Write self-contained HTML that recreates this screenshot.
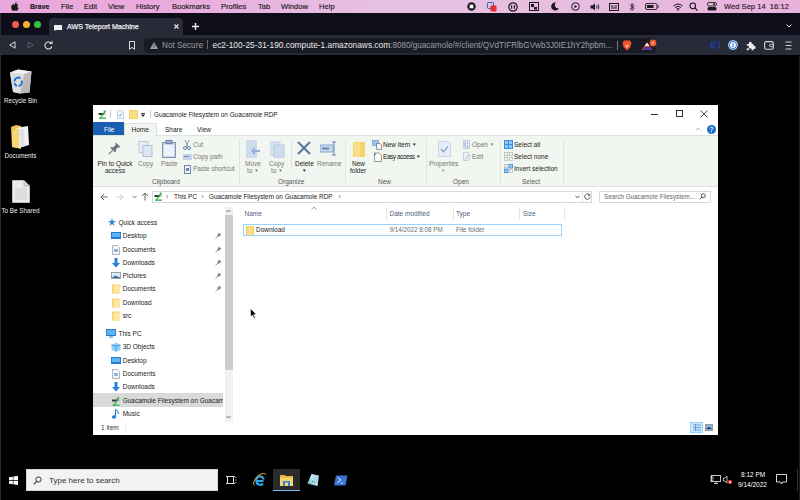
<!DOCTYPE html>
<html><head><meta charset="utf-8">
<style>
*{margin:0;padding:0;box-sizing:border-box}
html,body{width:800px;height:500px;overflow:hidden;background:#000;font-family:"Liberation Sans",sans-serif}
.a{position:absolute;white-space:nowrap}
svg{display:block}
#menubar{left:0;top:0;width:800px;height:13px;background:linear-gradient(90deg,#eaa8dc 0%,#e9abdc 20%,#e7bbe1 40%,#e6c3e3 52%,#e7bde0 70%,#e9b2dd 100%)}
.mt{font-size:7.6px;line-height:13px;top:0;color:#1e1a1e;-webkit-text-stroke:0.15px #1e1a1e}
#tabbar{left:0;top:13px;width:800px;height:22px;background:#0f0d19}
#toolbar{left:0;top:35px;width:800px;height:20px;background:#272a37}
.dot{width:7px;height:7px;border-radius:50%;top:21px}
.dt{color:#e8e8e8;font-size:6.3px;line-height:8px;text-align:center}
#win{left:93px;top:105px;width:625px;height:330px;background:#fff}
.w{position:absolute;white-space:nowrap;font-size:6.5px;line-height:8px;color:#1a1a1a}
</style></head><body>
<!-- mac menubar -->
<div id="menubar" class="a"></div>
<div class="a mt" style="left:30px;font-weight:700;font-size:7px">Brave</div>
<div class="a mt" style="left:61px">File</div>
<div class="a mt" style="left:84px">Edit</div>
<div class="a mt" style="left:108px">View</div>
<div class="a mt" style="left:136px">History</div>
<div class="a mt" style="left:172px">Bookmarks</div>
<div class="a mt" style="left:221px">Profiles</div>
<div class="a mt" style="left:258px">Tab</div>
<div class="a mt" style="left:281px">Window</div>
<div class="a mt" style="left:319px">Help</div>
<div class="a mt" style="left:724px">Wed Sep 14&nbsp; 16:12</div>

<!-- tab bar -->
<div id="tabbar" class="a"></div>
<div class="a dot" style="left:11.5px;background:#ee5b50"></div>
<div class="a dot" style="left:22.5px;background:#f4b32f"></div>
<div class="a dot" style="left:33.5px;background:#34c03f"></div>
<div class="a" style="left:49px;top:18px;width:134px;height:17px;background:#272a37;border-radius:4px 4px 0 0"></div>
<div class="a" style="left:67px;top:23px;font-size:7.1px;line-height:9px;color:#ececf0;font-weight:400;-webkit-text-stroke:0.25px #ececf0">AWS Teleport Machine</div>

<!-- toolbar -->
<div id="toolbar" class="a"></div>
<div class="a" style="left:144px;top:37.5px;width:512px;height:15px;background:#1a1c25;border-radius:4px"></div>
<div class="a" style="left:162px;top:41px;font-size:8.2px;line-height:9px;color:#9a9ca4">Not Secure</div>
<div class="a" style="left:207px;top:40px;width:1px;height:9px;background:#666"></div>
<div class="a" style="left:212.5px;top:41px;font-size:8.36px;line-height:9px;color:#e8e8ec">ec2-100-25-31-190.compute-1.amazonaws.com<span style="color:#9a9ca4;font-size:8.13px">:8080/guacamole/#/client/QVdTIFRlbGVwb3J0IE1hY2hpbm...</span></div>


<!-- apple -->
<svg class="a" style="left:11px;top:2px" width="8" height="9" viewBox="0 0 8 9"><path d="M4 2.2 C5 1.6 6.5 1.8 7.2 2.8 C6 3.5 6.2 5.6 7.6 6 C7.2 7.3 6.3 8.8 5.4 8.8 C4.7 8.8 4.6 8.4 3.8 8.4 C3 8.4 2.8 8.8 2.2 8.8 C1.2 8.8 0.2 7 0.2 5.3 C0.2 3.3 1.5 2.2 2.6 2.2 C3.2 2.2 3.6 2.5 4 2.5Z M4 2 C4 1 4.8 0.2 5.6 0.1 C5.7 1 4.9 2 4 2Z" fill="#1a1a1a"/></svg>
<!-- right menubar icons -->
<svg class="a" style="left:466px;top:2px" width="11" height="9" viewBox="0 0 11 9"><circle cx="5.5" cy="4.5" r="4.2" fill="#1b1b1b"/><rect x="3.7" y="2.7" width="3.6" height="3.6" fill="#fff"/></svg>
<svg class="a" style="left:487px;top:1.5px" width="10" height="10" viewBox="0 0 10 10"><rect x="0.5" y="0.5" width="6" height="6" rx="1" fill="none" stroke="#2060c0" stroke-width="1"/><rect x="3.5" y="3.5" width="6" height="6" rx="1" fill="#e03030"/></svg>
<svg class="a" style="left:508px;top:2px" width="10" height="10" viewBox="0 0 10 10"><circle cx="5" cy="5" r="4.2" fill="none" stroke="#1b1b1b" stroke-width="1.2"/><rect x="3" y="3.2" width="1.2" height="3.6" fill="#1b1b1b"/><rect x="5.8" y="3.2" width="1.2" height="3.6" fill="#1b1b1b"/></svg>
<svg class="a" style="left:529px;top:2px" width="10" height="9" viewBox="0 0 10 9"><rect x="0.5" y="0.5" width="9" height="8" fill="none" stroke="#1b1b1b" stroke-width="1"/><rect x="2" y="2" width="3" height="3" fill="#1b1b1b"/><rect x="5" y="5" width="3" height="2.5" fill="#1b1b1b"/></svg>
<svg class="a" style="left:551px;top:2px" width="8" height="9" viewBox="0 0 8 9"><path d="M5 0.5 A4 4 0 1 0 7.8 6.2 A3.3 3.3 0 0 1 5 0.5Z" fill="#1b1b1b"/></svg>
<svg class="a" style="left:571px;top:2px" width="9" height="9" viewBox="0 0 9 9"><circle cx="4.5" cy="4.5" r="3.8" fill="none" stroke="#1b1b1b" stroke-width="1"/><path d="M3.5 2.8 L6.2 4.5 L3.5 6.2Z" fill="#1b1b1b"/></svg>
<svg class="a" style="left:590px;top:2.5px" width="11" height="8" viewBox="0 0 11 8"><path d="M0.5 2.5 H2.5 L5 0.5 V7.5 L2.5 5.5 H0.5Z" fill="#1b1b1b"/><path d="M6.5 2.5 Q7.5 4 6.5 5.5 M8 1.5 Q9.8 4 8 6.5" stroke="#1b1b1b" stroke-width="0.9" fill="none"/></svg>
<svg class="a" style="left:609px;top:2.5px" width="10" height="8" viewBox="0 0 10 8"><rect x="0.5" y="0.5" width="9" height="7" fill="none" stroke="#1b1b1b" stroke-width="1"/><rect x="2" y="2.5" width="2.5" height="1" fill="#1b1b1b"/><rect x="5.5" y="2.5" width="2.5" height="1" fill="#1b1b1b"/><rect x="2" y="4.5" width="6" height="1" fill="#1b1b1b"/></svg>
<svg class="a" style="left:629px;top:1.5px" width="6" height="10" viewBox="0 0 6 10"><path d="M1 2.5 L5 6.5 L3 8.5 V1.5 L5 3.5 L1 7.5" stroke="#1b1b1b" stroke-width="0.9" fill="none"/></svg>
<svg class="a" style="left:645px;top:3px" width="14" height="7" viewBox="0 0 14 7"><rect x="0.5" y="0.5" width="11.5" height="6" rx="1.5" fill="none" stroke="#1b1b1b" stroke-width="0.9"/><rect x="2" y="2" width="6.5" height="3" fill="#1b1b1b"/><rect x="12.5" y="2.3" width="1" height="2.4" fill="#1b1b1b"/></svg>
<svg class="a" style="left:673px;top:2.5px" width="10" height="8" viewBox="0 0 10 8"><path d="M0.5 3 Q5 -1 9.5 3 M2 4.5 Q5 2 8 4.5 M3.5 6 Q5 5 6.5 6" stroke="#1b1b1b" stroke-width="1" fill="none"/><circle cx="5" cy="7" r="0.8" fill="#1b1b1b"/></svg>
<svg class="a" style="left:689px;top:2px" width="9" height="9" viewBox="0 0 9 9"><circle cx="3.8" cy="3.8" r="2.8" fill="none" stroke="#1b1b1b" stroke-width="1.1"/><path d="M5.8 5.8 L8.5 8.5" stroke="#1b1b1b" stroke-width="1.2"/></svg>
<svg class="a" style="left:707px;top:2px" width="10" height="9" viewBox="0 0 10 9"><rect x="0.5" y="0.5" width="9" height="3.5" rx="1.5" fill="none" stroke="#1b1b1b" stroke-width="0.9"/><rect x="0.5" y="5" width="9" height="3.5" rx="1.5" fill="#1b1b1b"/><circle cx="7" cy="2.25" r="1" fill="#1b1b1b"/></svg>
<!-- tab content -->
<svg class="a" style="left:54px;top:24.5px" width="8" height="6" viewBox="0 0 8 6"><rect x="0" y="0" width="8" height="5" fill="#eee"/><path d="M1 5 L0 6 L2.5 5Z" fill="#eee"/></svg>
<svg class="a" style="left:173.5px;top:24px" width="5" height="5" viewBox="0 0 5 5"><path d="M0.5 0.5 L4.5 4.5 M4.5 0.5 L0.5 4.5" stroke="#e6e6e6" stroke-width="1.2"/></svg>
<svg class="a" style="left:191.5px;top:23px" width="7" height="7" viewBox="0 0 7 7"><path d="M3.5 0 V7 M0 3.5 H7" stroke="#eee" stroke-width="1.4"/></svg>
<svg class="a" style="left:786px;top:24px" width="6" height="4" viewBox="0 0 6 4"><path d="M0.5 0.5 L3 3 L5.5 0.5" stroke="#ddd" stroke-width="1" fill="none"/></svg>
<!-- toolbar icons -->
<svg class="a" style="left:9px;top:41px" width="7" height="8" viewBox="0 0 7 8"><path d="M6 0.8 V7.2 L0.8 4Z" fill="none" stroke="#ddd" stroke-width="1"/></svg>
<svg class="a" style="left:27px;top:41px" width="7" height="8" viewBox="0 0 7 8"><path d="M1 0.8 V7.2 L6.2 4Z" fill="none" stroke="#5e6068" stroke-width="1"/></svg>
<svg class="a" style="left:44px;top:40.5px" width="9" height="9" viewBox="0 0 9 9"><path d="M7.6 3 A3.5 3.5 0 1 0 7.8 5.5" stroke="#ddd" stroke-width="1.1" fill="none"/><path d="M5.5 2.5 H8 V0" stroke="#ddd" stroke-width="1.1" fill="none"/></svg>
<svg class="a" style="left:128.5px;top:40.5px" width="6" height="9" viewBox="0 0 6 9"><path d="M0.5 0.5 H5.5 V8.3 L3 6.3 L0.5 8.3Z" fill="none" stroke="#ddd" stroke-width="1"/></svg>
<svg class="a" style="left:150px;top:41.5px" width="8" height="7" viewBox="0 0 8 7"><path d="M4 0 L8 7 H0Z" fill="#a0a2aa"/><rect x="3.6" y="2.3" width="0.8" height="2.4" fill="#1c1d24"/><rect x="3.6" y="5.3" width="0.8" height="0.8" fill="#1c1d24"/></svg>
<svg class="a" style="left:622px;top:39.5px" width="10" height="11" viewBox="0 0 10 11"><path d="M2 0.5 H8 L9.5 3 L8.5 7 L5 10.5 L1.5 7 L0.5 3Z" fill="#f1542a"/><path d="M3 4 L5 6 L7 4 L5 8Z" fill="#fff"/></svg>
<div class="a" style="left:616.5px;top:40.5px;width:1.2px;height:9px;background:#77787e"></div>
<svg class="a" style="left:641px;top:38.5px" width="16" height="12" viewBox="0 0 16 12"><path d="M0.5 11 L6 3.5 L11.5 11Z" fill="#d8402c"/><path d="M6 3.5 L8.5 7 L3.5 7Z" fill="#f4e8f0"/><path d="M1.5 11 L4 8 L9 8 L11.5 11Z" fill="#4a3aa8"/><circle cx="12" cy="4" r="3.4" fill="#ec5b34"/><circle cx="12" cy="4" r="1.3" fill="#f7a38a"/></svg>
<svg class="a" style="left:709.5px;top:40px" width="11" height="10" viewBox="0 0 11 10"><path d="M1 1.5 V8.5 M1 5 L5 1.5 M1 5 L5 8.5" stroke="#1f3c94" stroke-width="1.6" fill="none"/><path d="M6.5 2 H9.5 V8 H6.5" stroke="#1f3c94" stroke-width="1.4" fill="none"/><rect x="3.5" y="4" width="2" height="2" fill="#1f3c94"/></svg>
<svg class="a" style="left:727.5px;top:40px" width="10" height="10" viewBox="0 0 10 10"><circle cx="5" cy="5" r="4.8" fill="#dfe9f8"/><circle cx="5" cy="5" r="3.9" fill="#2f7de6"/><circle cx="5" cy="5" r="2.9" fill="#fff"/><rect x="4.4" y="2.8" width="1.2" height="4.4" fill="#2f7de6"/></svg>
<svg class="a" style="left:745.5px;top:40.5px" width="10" height="10" viewBox="0 0 10 10"><path d="M0.8 3 H3 A1.5 1.5 0 1 1 5.6 3 H7.5 V5 A1.5 1.5 0 1 1 7.5 7.8 V9.3 H5.4 A1.4 1.4 0 1 0 3 9.3 H0.8 V7.2 A1.4 1.4 0 1 0 0.8 4.8Z" fill="#ececec"/></svg>
<svg class="a" style="left:764px;top:41px" width="10" height="9" viewBox="0 0 10 9"><rect x="0.6" y="0.6" width="8.8" height="7.6" rx="1.8" fill="none" stroke="#d4d4d4" stroke-width="1.1"/><rect x="5.6" y="3.3" width="3.6" height="2.4" rx="0.6" fill="none" stroke="#d4d4d4" stroke-width="0.9"/></svg>
<svg class="a" style="left:784.5px;top:40.5px" width="7" height="9" viewBox="0 0 7 9"><path d="M0.5 1 H6.5 M0.5 4.5 H6.5 M0.5 8 H6.5" stroke="#d0d0d0" stroke-width="1"/></svg>
<!-- desktop icons -->
<div class="a dt" style="left:0;top:97px;width:41px">Recycle Bin</div>
<div class="a dt" style="left:0;top:152px;width:41px">Documents</div>
<div class="a dt" style="left:0;top:207px;width:41px">To Be Shared</div>

<!-- explorer window -->

<div class="a" style="left:93px;top:105px;width:625px;height:330px;background:#fff"></div>
<!-- title bar -->
<svg class="a" style="left:98px;top:110px" width="9" height="9" viewBox="0 0 9 9"><rect x="0.5" y="3" width="5.5" height="2" fill="#3a3a3a"/><rect x="6" y="3.5" width="2" height="1" fill="#999"/><path d="M2.5 8 L4.5 5 L7.5 1" stroke="#35b04a" stroke-width="1.3" fill="none"/><circle cx="6.5" cy="1.5" r="1" fill="#35b04a"/><rect x="1" y="7.5" width="7" height="1.3" fill="#35b04a"/></svg>
<div class="a" style="left:110px;top:110px;width:1px;height:8px;background:#ccc"></div>
<svg class="a" style="left:117px;top:110px" width="7" height="9" viewBox="0 0 7 9"><path d="M0.5 0.5 H5 L6.5 2 V8.5 H0.5Z" fill="#f3f6fb" stroke="#b8c6e0" stroke-width="0.8"/><path d="M1.8 4.8 L3 6.2 L5.2 3.2" stroke="#7fa6d6" stroke-width="0.9" fill="none"/></svg>
<svg class="a" style="left:128.5px;top:110px" width="9" height="9" viewBox="0 0 9 9"><rect x="0" y="0" width="9" height="9" fill="#f4cf5f"/><rect x="1" y="0.8" width="7" height="7.4" fill="#f9dc85"/></svg>
<svg class="a" style="left:141px;top:113px" width="4" height="4" viewBox="0 0 4 4"><rect x="0" y="0" width="4" height="0.8" fill="#222"/><path d="M0 1.6 H4 L2 4Z" fill="#222"/></svg>
<div class="a" style="left:150px;top:110px;width:1px;height:8px;background:#ccc"></div>
<div class="w" style="left:154px;top:110.5px;font-size:6.4px">Guacamole Filesystem on Guacamole RDP</div>
<div class="a" style="left:650.5px;top:113.5px;width:7px;height:1px;background:#333"></div>
<div class="a" style="left:675.5px;top:110px;width:7px;height:7px;border:1px solid #333"></div>
<svg class="a" style="left:700px;top:110px" width="8" height="8" viewBox="0 0 8 8"><path d="M0.5 0.5 L7.5 7.5 M7.5 0.5 L0.5 7.5" stroke="#333" stroke-width="0.9"/></svg>
<!-- ribbon tabs -->
<div class="a" style="left:93px;top:122px;width:31px;height:13px;background:#1a5eb4"></div>
<div class="w" style="left:104px;top:125.5px;color:#fff">File</div>
<div class="a" style="left:124px;top:123px;width:33px;height:13px;background:#f2f6f0;border:1px solid #dde1dc;border-bottom:none"></div>
<div class="w" style="left:131.5px;top:125.5px">Home</div>
<div class="w" style="left:165px;top:126px">Share</div>
<div class="w" style="left:197px;top:126px">View</div>
<svg class="a" style="left:706.5px;top:124.5px" width="9" height="9" viewBox="0 0 9 9"><circle cx="4.5" cy="4.5" r="4.5" fill="#1c6fce"/><path d="M3.2 3.4 A1.3 1.3 0 1 1 4.5 4.7 V5.6" stroke="#fff" stroke-width="0.9" fill="none"/><rect x="4" y="6.4" width="1" height="1" fill="#fff"/></svg>
<svg class="a" style="left:695px;top:127px" width="6" height="4" viewBox="0 0 6 4"><path d="M0.5 3.5 L3 1 L5.5 3.5" stroke="#aaa" stroke-width="0.8" fill="none"/></svg>
<!-- ribbon body -->
<div class="a" style="left:93px;top:135px;width:625px;height:52px;background:#f2f6f0;border-top:1px solid #dde1dc;border-bottom:1px solid #dde1dc"></div>
<div class="a" style="left:125px;top:135px;width:31px;height:1px;background:#f2f6f0"></div>
<div class="a" style="left:239px;top:139px;width:1px;height:46px;background:#e2e3e4"></div>
<div class="a" style="left:345px;top:139px;width:1px;height:46px;background:#e2e3e4"></div>
<div class="a" style="left:425.5px;top:139px;width:1px;height:46px;background:#e2e3e4"></div>
<div class="a" style="left:499.5px;top:139px;width:1px;height:46px;background:#e2e3e4"></div>
<div class="a" style="left:563px;top:139px;width:1px;height:46px;background:#e2e3e4"></div>
<div class="a" style="left:290.5px;top:141px;width:1px;height:29px;background:#e2e3e4"></div>



<!-- clipboard group -->
<svg class="a" style="left:108px;top:142px" width="13" height="13" viewBox="0 0 13 13"><path d="M8 0.5 L12.5 5 L11.3 5.6 L10.3 5.2 L7.8 7.7 L8 9.8 L7 10.6 L2.4 6 L3.2 5 L5.3 5.2 L7.8 2.7 L7.4 1.7Z" fill="#707480"/><path d="M4.6 8.4 L0.8 12.2" stroke="#707480" stroke-width="1.2"/></svg>
<div class="w" style="left:97.5px;top:160px">Pin to Quick</div>
<div class="w" style="left:105px;top:167px">access</div>
<svg class="a" style="left:138px;top:141px" width="16" height="16" viewBox="0 0 16 16"><rect x="1" y="0.5" width="9" height="11" fill="#e9eef6" stroke="#b9c7dc"/><rect x="5" y="4.5" width="9" height="11" fill="#dfe7f3" stroke="#aebfd8"/></svg>
<div class="w" style="left:138px;top:160px;color:#777">Copy</div>
<svg class="a" style="left:162px;top:140px" width="14" height="18" viewBox="0 0 14 18"><rect x="0.5" y="2.5" width="13" height="15" fill="#c9d6e8" stroke="#7c95b8"/><rect x="2" y="5" width="10" height="11" fill="#eef3fa"/><rect x="4" y="0.5" width="6" height="3" fill="#9fb1ca" stroke="#6d86a8"/></svg>
<div class="w" style="left:161px;top:160px;color:#777">Paste</div>
<svg class="a" style="left:183px;top:140px" width="8" height="10" viewBox="0 0 8 10"><path d="M2 0 L5 7 M6 0 L3 7" stroke="#8aa0bf" stroke-width="1"/><circle cx="2" cy="8" r="1.5" fill="none" stroke="#6f87ab"/><circle cx="6" cy="8" r="1.5" fill="none" stroke="#6f87ab"/></svg>
<div class="w" style="left:193px;top:140.5px;color:#777">Cut</div>
<svg class="a" style="left:183px;top:154px" width="9" height="6" viewBox="0 0 9 6"><rect x="0" y="0" width="9" height="6" fill="#c6d3e6"/><rect x="1" y="2" width="5" height="1" fill="#6f87ab"/></svg>
<div class="w" style="left:193px;top:153px;color:#777">Copy path</div>
<svg class="a" style="left:184px;top:165px" width="7" height="9" viewBox="0 0 7 9"><rect x="0.5" y="0.5" width="6" height="8" fill="#eef3fa" stroke="#6f87ab"/><rect x="2" y="3" width="3" height="3" fill="#6f87ab"/></svg>
<div class="w" style="left:193px;top:165px;color:#777">Paste shortcut</div>
<div class="w" style="left:152px;top:178px;color:#555">Clipboard</div>
<!-- organize -->
<svg class="a" style="left:246px;top:140px" width="15" height="18" viewBox="0 0 15 18"><rect x="0" y="0" width="11" height="18" fill="#cfdcec"/><path d="M14 10 L9 10 L9 7 L5 11 L9 15 L9 12 L14 12Z" fill="#8fb0d8"/></svg>
<div class="w" style="left:245px;top:160px;color:#777">Move</div>
<div class="w" style="left:247px;top:167px;color:#777">to <span style="font-size:4.5px;vertical-align:1px">&#9660;</span></div>
<svg class="a" style="left:270px;top:140px" width="15" height="18" viewBox="0 0 15 18"><rect x="0" y="2" width="10" height="13" fill="#dbe4f0" stroke="#c4d1e3"/><rect x="4" y="5" width="10" height="13" fill="#cfdcec" stroke="#b8c8de"/></svg>
<div class="w" style="left:269px;top:160px;color:#777">Copy</div>
<div class="w" style="left:271px;top:167px;color:#777">to <span style="font-size:4.5px;vertical-align:1px">&#9660;</span></div>
<svg class="a" style="left:297px;top:141px" width="14" height="14" viewBox="0 0 14 14"><path d="M1.5 1.5 L12.5 12.5 M12.5 1.5 L1.5 12.5" stroke="#5879a2" stroke-width="2.1" stroke-linecap="round"/></svg>
<div class="w" style="left:295px;top:160px;color:#222">Delete</div>
<div class="w" style="left:302px;top:167px;color:#222"><span style="font-size:4.5px;vertical-align:1px">&#9660;</span></div>
<svg class="a" style="left:320px;top:141px" width="18" height="15" viewBox="0 0 18 15"><rect x="0" y="4" width="13" height="7" fill="#c8d7ea" stroke="#8aa6cc"/><rect x="2" y="6.5" width="7" height="2" fill="#5f86bb"/><path d="M12 1 L16 1 M14 1 L14 14 M12 14 L16 14" stroke="#5f86bb" stroke-width="1"/></svg>
<div class="w" style="left:317px;top:160px;color:#777">Rename</div>
<div class="w" style="left:278px;top:178px;color:#555">Organize</div>
<!-- new -->
<svg class="a" style="left:352.5px;top:141.5px" width="12" height="15" viewBox="0 0 12 15"><rect x="0" y="0" width="12" height="15" fill="#f6d267"/><rect x="1" y="1" width="6" height="14" fill="#f9df8e"/></svg>
<div class="w" style="left:352px;top:160px;color:#222">New</div>
<div class="w" style="left:350px;top:167px;color:#222">folder</div>
<svg class="a" style="left:372px;top:139.5px" width="10" height="10" viewBox="0 0 10 10"><rect x="0.3" y="0.3" width="6" height="5" fill="#9cc3ea" stroke="#5b8fcf" stroke-width="0.6"/><path d="M4.5 3.5 H8 L9.5 5 V9.5 H4.5Z" fill="#f4f6fa" stroke="#6c6c6c" stroke-width="0.7"/></svg>
<div class="w" style="left:383px;top:140.5px;color:#222">New item <span style="font-size:4.5px;vertical-align:1px">&#9660;</span></div>
<svg class="a" style="left:373px;top:152px" width="9" height="10" viewBox="0 0 9 10"><path d="M1.5 1 H6 L8.5 3.5 V9.5 H1.5Z" fill="#fff" stroke="#6c6c6c" stroke-width="0.7"/><path d="M0.5 3.5 L2.5 1 L2.8 2.8Z" fill="#2d7ad6"/></svg>
<div class="w" style="left:383px;top:153px;color:#222;letter-spacing:-0.45px">Easy access <span style="font-size:4.5px;vertical-align:1px">&#9660;</span></div>
<div class="w" style="left:378px;top:178px;color:#555">New</div>
<!-- open -->
<svg class="a" style="left:437.5px;top:141px" width="13" height="16" viewBox="0 0 13 16"><path d="M0.5 0.5 H10 L12.5 3 V15.5 H0.5Z" fill="#e6eef9" stroke="#bfcde3" stroke-width="0.8"/><path d="M2.8 8 L5.3 10.8 L10 5.5" stroke="#7594c0" stroke-width="1.1" fill="none"/></svg>
<div class="w" style="left:429px;top:160px;color:#777">Properties</div>
<div class="w" style="left:441px;top:167px;color:#999"><span style="font-size:4.5px;vertical-align:1px">&#9660;</span></div>
<svg class="a" style="left:462.5px;top:140px" width="7" height="9" viewBox="0 0 7 9"><rect x="0.5" y="0.5" width="6" height="8" fill="#e8eef8" stroke="#b0c0d8" stroke-width="0.7"/><path d="M2 1.5 V7.5 M4.5 2 V4 M4.5 5 V8" stroke="#7d96bb" stroke-width="0.8"/></svg>
<div class="w" style="left:472px;top:140.5px;color:#777">Open <span style="font-size:4.5px;vertical-align:1px">&#9660;</span></div>
<svg class="a" style="left:462.5px;top:152px" width="8" height="9" viewBox="0 0 8 9"><path d="M0.5 0.5 H5 L7.5 4 L5 8.5 H0.5Z" fill="#eef3fa" stroke="#b0c0d8" stroke-width="0.7"/><path d="M2 7.5 L6 2" stroke="#8fa9cc" stroke-width="0.8"/></svg>
<div class="w" style="left:472px;top:153px;color:#777">Edit</div>
<div class="w" style="left:453px;top:178px;color:#555">Open</div>
<!-- select -->
<svg class="a" style="left:504px;top:140px" width="9" height="9" viewBox="0 0 9 9"><rect x="0" y="0" width="9" height="9" fill="#3b8fe3"/><rect x="1" y="1" width="3" height="3" fill="#8fcaf7"/><rect x="5" y="1" width="3" height="3" fill="#8fcaf7"/><rect x="1" y="5" width="3" height="3" fill="#8fcaf7"/><rect x="5" y="5" width="3" height="3" fill="#8fcaf7"/></svg>
<div class="w" style="left:514px;top:140.5px;color:#222">Select all</div>
<svg class="a" style="left:504px;top:152px" width="9" height="9" viewBox="0 0 9 9"><g fill="none" stroke="#b5b5b5" stroke-width="0.7"><rect x="0.5" y="0.5" width="3.2" height="3.2"/><rect x="5.3" y="0.5" width="3.2" height="3.2"/><rect x="0.5" y="5.3" width="3.2" height="3.2"/><rect x="5.3" y="5.3" width="3.2" height="3.2"/></g></svg>
<div class="w" style="left:514px;top:153px;color:#222">Select none</div>
<svg class="a" style="left:504px;top:164px" width="9" height="9" viewBox="0 0 9 9"><g fill="none" stroke="#b5b5b5" stroke-width="0.7"><rect x="0.5" y="0.5" width="3.2" height="3.2"/><rect x="5.3" y="5.3" width="3.2" height="3.2"/></g><rect x="4.6" y="0" width="4.4" height="4.4" fill="#3b8fe3"/><rect x="5.4" y="0.8" width="2.8" height="2.8" fill="#8fcaf7"/><rect x="0" y="4.6" width="4.4" height="4.4" fill="#3b8fe3"/><rect x="0.8" y="5.4" width="2.8" height="2.8" fill="#8fcaf7"/></svg>
<div class="w" style="left:514px;top:165px;color:#222">Invert selection</div>
<div class="w" style="left:522px;top:178px;color:#555">Select</div>
<!-- address bar -->
<svg class="a" style="left:100px;top:193px" width="8" height="8" viewBox="0 0 8 8"><path d="M7.5 4 H1 M4 1 L1 4 L4 7" stroke="#555" stroke-width="0.9" fill="none"/></svg>
<svg class="a" style="left:116px;top:193px" width="8" height="8" viewBox="0 0 8 8"><path d="M0.5 4 H7 M4 1 L7 4 L4 7" stroke="#c4c4c4" stroke-width="0.9" fill="none"/></svg>
<svg class="a" style="left:132px;top:195px" width="5" height="4" viewBox="0 0 5 4"><path d="M0.5 0.8 L2.5 3 L4.5 0.8" stroke="#666" stroke-width="0.8" fill="none"/></svg>
<svg class="a" style="left:141px;top:192px" width="8" height="9" viewBox="0 0 8 9"><path d="M4 8.5 V1 M1 4 L4 1 L7 4" stroke="#555" stroke-width="0.9" fill="none"/></svg>
<div class="a" style="left:152px;top:190.5px;width:440px;height:12px;border:1px solid #d9d9d9;background:#fff"></div>
<svg class="a" style="left:154px;top:192px" width="9" height="9" viewBox="0 0 9 9"><rect x="0.5" y="3" width="5.5" height="2" fill="#3a3a3a"/><rect x="6" y="3.5" width="2" height="1" fill="#999"/><path d="M2.5 8 L4.5 5 L7.5 1" stroke="#35b04a" stroke-width="1.3" fill="none"/><circle cx="6.5" cy="1.5" r="1" fill="#35b04a"/><rect x="1" y="7.5" width="7" height="1.3" fill="#35b04a"/></svg>
<div class="w" style="left:166px;top:192.5px;color:#555">&#8250;</div>
<div class="w" style="left:174px;top:192.5px;color:#222">This PC</div>
<div class="w" style="left:201.5px;top:192.5px;color:#555">&#8250;</div>
<div class="w" style="left:209px;top:192.5px;color:#222;font-size:6.4px">Guacamole Filesystem on Guacamole RDP</div>
<div class="w" style="left:338.5px;top:192.5px;color:#555">&#8250;</div>
<svg class="a" style="left:575px;top:195px" width="5" height="4" viewBox="0 0 5 4"><path d="M0.5 0.8 L2.5 3 L4.5 0.8" stroke="#444" stroke-width="0.9" fill="none"/></svg>
<div class="a" style="left:581.5px;top:191px;width:1px;height:11px;background:#e6e6e6"></div>
<svg class="a" style="left:584px;top:193px" width="7" height="7" viewBox="0 0 7 7"><path d="M5.8 2.5 A2.7 2.7 0 1 0 6 4" stroke="#555" stroke-width="0.9" fill="none"/><path d="M4.5 0.5 L6.2 2.4 L4 3" stroke="#555" stroke-width="0.8" fill="none"/></svg>
<div class="a" style="left:598.5px;top:190.5px;width:112px;height:12px;border:1px solid #d9d9d9;background:#fff"></div>
<div class="w" style="left:604px;top:192.5px;color:#666;font-size:6.3px">Search Guacamole Filesystem...</div>
<svg class="a" style="left:699px;top:193px" width="7" height="7" viewBox="0 0 7 7"><circle cx="4.3" cy="2.7" r="2" stroke="#444" stroke-width="0.9" fill="none"/><path d="M3 4 L0.8 6.2" stroke="#444" stroke-width="1"/></svg>
<!-- nav pane -->
<svg class="a" style="left:108px;top:218px" width="8" height="8" viewBox="0 0 8 8"><path d="M4 0 L5 3 L8 3 L5.5 5 L6.5 8 L4 6 L1.5 8 L2.5 5 L0 3 L3 3Z" fill="#2f88e0"/></svg>
<div class="w" style="left:118.5px;top:218.5px">Quick access</div>
<div class="a" style="left:110.7px;top:231.0px"><svg width="10" height="9" viewBox="0 0 10 9"><rect x="0" y="1" width="10" height="7" fill="#1f7fd6"/><rect x="1" y="2" width="8" height="4" fill="#5fb4f2"/></svg></div><div class="w" style="left:122.7px;top:232.0px;color:#222">Desktop</div><svg class="a" style="left:215px;top:232.0px" width="7" height="7" viewBox="0 0 7 7"><path d="M4 0.5 L6.5 3 L5.5 3.5 L3.5 5 L2 3.5 L3.5 1.5Z" fill="#8a8a8a"/><path d="M2.7 4.3 L0.5 6.5" stroke="#8a8a8a" stroke-width="0.9"/></svg><div class="a" style="left:110.7px;top:244.5px"><svg width="10" height="10" viewBox="0 0 10 10"><path d="M1.5 0.5 H6.5 L8.5 2.5 V9.5 H1.5Z" fill="#f4f6f9" stroke="#9aa7b5" stroke-width="0.8"/><rect x="3" y="4" width="4" height="3" fill="#8cb5e0"/></svg></div><div class="w" style="left:122.7px;top:245.5px;color:#222">Documents</div><svg class="a" style="left:215px;top:245.5px" width="7" height="7" viewBox="0 0 7 7"><path d="M4 0.5 L6.5 3 L5.5 3.5 L3.5 5 L2 3.5 L3.5 1.5Z" fill="#8a8a8a"/><path d="M2.7 4.3 L0.5 6.5" stroke="#8a8a8a" stroke-width="0.9"/></svg><div class="a" style="left:110.7px;top:257.5px"><svg width="10" height="10" viewBox="0 0 10 10"><path d="M3.5 0 H6.5 V5 H9 L5 9.5 L1 5 H3.5Z" fill="#2a7fd8"/></svg></div><div class="w" style="left:122.7px;top:258.5px;color:#222">Downloads</div><svg class="a" style="left:215px;top:258.5px" width="7" height="7" viewBox="0 0 7 7"><path d="M4 0.5 L6.5 3 L5.5 3.5 L3.5 5 L2 3.5 L3.5 1.5Z" fill="#8a8a8a"/><path d="M2.7 4.3 L0.5 6.5" stroke="#8a8a8a" stroke-width="0.9"/></svg><div class="a" style="left:110.7px;top:271.0px"><svg width="10" height="9" viewBox="0 0 10 9"><rect x="0.5" y="1.5" width="9" height="6" fill="#dfe9f3" stroke="#7f8e9c" stroke-width="0.8"/><path d="M1 7 L4 4.5 L9 6.5 V7Z" fill="#3a6ea8"/></svg></div><div class="w" style="left:122.7px;top:272.0px;color:#222">Pictures</div><svg class="a" style="left:215px;top:272.0px" width="7" height="7" viewBox="0 0 7 7"><path d="M4 0.5 L6.5 3 L5.5 3.5 L3.5 5 L2 3.5 L3.5 1.5Z" fill="#8a8a8a"/><path d="M2.7 4.3 L0.5 6.5" stroke="#8a8a8a" stroke-width="0.9"/></svg><div class="a" style="left:110.7px;top:284.0px"><svg width="10" height="10" viewBox="0 0 10 10"><rect x="1" y="0.5" width="8" height="9" fill="#f6d36b"/><rect x="2.5" y="1.5" width="6.5" height="8" fill="#fde6a3"/></svg></div><div class="w" style="left:122.7px;top:285.0px;color:#222">Documents</div><svg class="a" style="left:215px;top:285.0px" width="7" height="7" viewBox="0 0 7 7"><path d="M4 0.5 L6.5 3 L5.5 3.5 L3.5 5 L2 3.5 L3.5 1.5Z" fill="#8a8a8a"/><path d="M2.7 4.3 L0.5 6.5" stroke="#8a8a8a" stroke-width="0.9"/></svg><div class="a" style="left:110.7px;top:297.5px"><svg width="10" height="10" viewBox="0 0 10 10"><rect x="1" y="0.5" width="8" height="9" fill="#f6d36b"/><rect x="2.5" y="1.5" width="6.5" height="8" fill="#fde6a3"/></svg></div><div class="w" style="left:122.7px;top:298.5px;color:#222">Download</div><div class="a" style="left:110.7px;top:310.5px"><svg width="10" height="10" viewBox="0 0 10 10"><rect x="1" y="0.5" width="8" height="9" fill="#f6d36b"/><rect x="2.5" y="1.5" width="6.5" height="8" fill="#fde6a3"/></svg></div><div class="w" style="left:122.7px;top:311.5px;color:#222">src</div>
<svg class="a" style="left:106px;top:329px" width="10" height="9" viewBox="0 0 10 9"><rect x="0.5" y="0.5" width="9" height="6" fill="#5fb3f0" stroke="#2b7fcc"/><rect x="3" y="7.5" width="4" height="1" fill="#2b7fcc"/></svg>
<div class="w" style="left:118.5px;top:329.5px">This PC</div>
<div class="a" style="left:93px;top:393px;width:130px;height:14px;background:#d9d9d9"></div>
<div class="a" style="left:110.7px;top:342.0px"><svg width="10" height="10" viewBox="0 0 10 10"><path d="M5 0.5 L9.5 3 V8 L5 9.5 L0.5 8 V3Z" fill="#8fd0f5"/><path d="M5 4 V9.5 M0.5 3 L5 4 L9.5 3" stroke="#2a8fd6" stroke-width="0.8" fill="none"/></svg></div><div class="w" style="left:122.7px;top:343.0px;color:#222">3D Objects</div><div class="a" style="left:110.7px;top:355.5px"><svg width="10" height="9" viewBox="0 0 10 9"><rect x="0" y="1" width="10" height="7" fill="#1f7fd6"/><rect x="1" y="2" width="8" height="4" fill="#5fb4f2"/></svg></div><div class="w" style="left:122.7px;top:356.5px;color:#222">Desktop</div><div class="a" style="left:110.7px;top:368.5px"><svg width="10" height="10" viewBox="0 0 10 10"><path d="M1.5 0.5 H6.5 L8.5 2.5 V9.5 H1.5Z" fill="#f4f6f9" stroke="#9aa7b5" stroke-width="0.8"/><rect x="3" y="4" width="4" height="3" fill="#8cb5e0"/></svg></div><div class="w" style="left:122.7px;top:369.5px;color:#222">Documents</div><div class="a" style="left:110.7px;top:382.0px"><svg width="10" height="10" viewBox="0 0 10 10"><path d="M3.5 0 H6.5 V5 H9 L5 9.5 L1 5 H3.5Z" fill="#2a7fd8"/></svg></div><div class="w" style="left:122.7px;top:383.0px;color:#222">Downloads</div><div class="a" style="left:110.7px;top:395.5px"><svg width="10" height="10" viewBox="0 0 10 10"><rect x="1" y="3.5" width="5.5" height="2" fill="#3a3a3a"/><rect x="6.5" y="4" width="2" height="1" fill="#999"/><path d="M3 9 L5 6 L8 2" stroke="#35b04a" stroke-width="1.3" fill="none"/><circle cx="7" cy="2" r="1" fill="#35b04a"/><rect x="1.5" y="8.5" width="7" height="1.3" fill="#35b04a"/></svg></div><div class="w" style="left:122.7px;top:396.5px;color:#222;width:100.3px;overflow:hidden">Guacamole Filesystem on Guacam</div><div class="a" style="left:110.7px;top:408.5px"><svg width="10" height="10" viewBox="0 0 10 10"><path d="M4.5 0.5 V7.5" stroke="#2a7fd8" stroke-width="1.2"/><ellipse cx="3" cy="8" rx="2.2" ry="1.7" fill="#2a7fd8"/><path d="M4.5 0.5 Q8 2 7.5 5" stroke="#2a7fd8" stroke-width="1" fill="none"/></svg></div><div class="w" style="left:122.7px;top:409.5px;color:#222">Music</div>
<!-- scrollbar -->
<div class="a" style="left:224.5px;top:207px;width:8px;height:215px;background:#f0f0f0"></div>
<div class="a" style="left:224.5px;top:215px;width:8px;height:155px;background:#cdcdcd"></div>
<svg class="a" style="left:226px;top:209px" width="5" height="4" viewBox="0 0 5 4"><path d="M0.5 3 L2.5 1 L4.5 3" stroke="#555" stroke-width="0.9" fill="none"/></svg>
<svg class="a" style="left:226px;top:415px" width="5" height="4" viewBox="0 0 5 4"><path d="M0.5 1 L2.5 3 L4.5 1" stroke="#555" stroke-width="0.9" fill="none"/></svg>
<!-- content -->
<svg class="a" style="left:311px;top:206px" width="6" height="4" viewBox="0 0 6 4"><path d="M0.5 3.5 L3 1 L5.5 3.5" stroke="#888" stroke-width="0.8" fill="none"/></svg>
<div class="w" style="left:244.5px;top:210px;color:#4c607a">Name</div>
<div class="a" style="left:385.5px;top:207px;width:1px;height:13px;background:#e5e5e5"></div>
<div class="w" style="left:389.5px;top:210px;color:#4c607a">Date modified</div>
<div class="a" style="left:452.5px;top:207px;width:1px;height:13px;background:#e5e5e5"></div>
<div class="w" style="left:456px;top:210px;color:#4c607a">Type</div>
<div class="a" style="left:519px;top:207px;width:1px;height:13px;background:#e5e5e5"></div>
<div class="w" style="left:523px;top:210px;color:#4c607a">Size</div>
<div class="a" style="left:564px;top:207px;width:1px;height:13px;background:#e5e5e5"></div>
<div class="a" style="left:242.5px;top:224px;width:319px;height:12px;border:1px solid #99d1ff;background:#fff"></div>
<svg class="a" style="left:246px;top:225.5px" width="8" height="9" viewBox="0 0 8 9"><rect x="0" y="0" width="8" height="9" fill="#f3cb59"/><rect x="1" y="0.8" width="6" height="8" fill="#fadf8f"/></svg>
<div class="w" style="left:256px;top:225.5px">Download</div>
<div class="w" style="left:389.5px;top:225.5px;color:#6d6d6d;font-size:6.3px">9/14/2022 8:08 PM</div>
<div class="w" style="left:456px;top:225.5px;color:#6d6d6d">File folder</div>
<!-- status -->
<div class="w" style="left:101px;top:424px;color:#333">1 item</div>
<div class="a" style="left:125px;top:423px;width:1px;height:10px;background:#eee"></div>
<div class="a" style="left:690px;top:422px;width:13px;height:11px;background:#cce8ff;border:1px solid #99d1ff"></div>
<svg class="a" style="left:693px;top:424px" width="8" height="7" viewBox="0 0 8 7"><path d="M0 1H8M0 3.5H8M0 6H8" stroke="#5b8ed0" stroke-width="0.8"/><path d="M2.5 0V7" stroke="#5b8ed0" stroke-width="0.8"/></svg>
<svg class="a" style="left:705px;top:424px" width="8" height="7" viewBox="0 0 8 7"><rect x="0.5" y="0.5" width="7" height="6" fill="#8ab6e8" stroke="#9a9a9a"/><path d="M1 5 L4 3 L7 5Z" fill="#222"/></svg>
<!-- cursor -->
<svg class="a" style="left:250px;top:308px" width="7" height="11" viewBox="0 0 7 11"><path d="M0.5 0.5 L0.5 9 L2.5 7 L4 10.5 L5.3 10 L3.8 6.5 L6.5 6.5Z" fill="#000" stroke="#fff" stroke-width="0.6"/></svg>

<div class="a" style="left:0;top:13px;width:1px;height:487px;background:#2a2a30"></div>
<div class="a" style="left:799px;top:55px;width:1px;height:445px;background:#1e1e22"></div>
<!-- taskbar -->
<div class="a" style="left:26px;top:469px;width:192px;height:22px;background:#f2f2f2;border:1px solid #d6d6d6"></div>

<!-- desktop icon graphics -->
<svg class="a" style="left:9px;top:68px" width="24" height="26" viewBox="0 0 24 26"><path d="M1 4.5 L9 1.5 L22.5 3.5 L20.5 24.5 L11 25.5 L4 24Z" fill="#cfcfcf"/><path d="M1 4.5 L9 1.5 L22.5 3.5 L15 6Z" fill="#f2f2f2"/><path d="M15 6 L22.5 3.5 L20.5 24.5 L11 25.5Z" fill="#b9b9b9"/><path d="M1 4.5 L15 6 L11 25.5 L4 24Z" fill="#dedede"/><path d="M5.5 13.5 A3.6 3.6 0 0 1 11.5 10.5" stroke="#1c74d8" stroke-width="1.8" fill="none"/><path d="M12.3 12.5 A3.6 3.6 0 0 1 9.5 18" stroke="#1c74d8" stroke-width="1.8" fill="none"/><path d="M8 17.8 A3.6 3.6 0 0 1 5.4 15" stroke="#1c74d8" stroke-width="1.8" fill="none"/></svg>
<svg class="a" style="left:11px;top:125px" width="19" height="24" viewBox="0 0 19 24"><path d="M0 2 L5 0 L10 1 L10 24 L1 22Z" fill="#f0c24a"/><path d="M5 3 L17 1 L18 20 L8 23Z" fill="#f4f4f4"/><path d="M8 4 L13 4 L14 21 L9 22Z" fill="#dfe3e8"/><path d="M1 6 L8 3 L8 23 L1 22Z" fill="#f7d573"/></svg>
<svg class="a" style="left:12px;top:180px" width="18" height="23" viewBox="0 0 18 23"><path d="M0.5 0.5 H12 L17.5 6 V22.5 H0.5Z" fill="#ececec" stroke="#bdbdbd"/><path d="M12 0.5 V6 H17.5" fill="#d0d0d0" stroke="#bdbdbd"/><path d="M3 9H15M3 11H15M3 13H15M3 15H15M3 17H15M3 19H15" stroke="#c9c9c9" stroke-width="0.8"/></svg>
<!-- taskbar icons -->
<svg class="a" style="left:9px;top:476px" width="9" height="9" viewBox="0 0 9 9"><path d="M0 1.3 L3.8 0.7 V4.1 H0Z M4.4 0.6 L9 0 V4.1 H4.4Z M0 4.7 H3.8 V8.2 L0 7.7Z M4.4 4.7 H9 V9 L4.4 8.3Z" fill="#fff"/></svg>
<svg class="a" style="left:33px;top:476px" width="9" height="9" viewBox="0 0 9 9"><circle cx="5.5" cy="3.5" r="2.6" stroke="#333" stroke-width="1" fill="none"/><path d="M3.6 5.4 L0.7 8.3" stroke="#333" stroke-width="1.1"/></svg>
<svg class="a" style="left:226px;top:475px" width="11" height="10" viewBox="0 0 11 10"><rect x="1.5" y="1.5" width="6" height="7" fill="none" stroke="#ddd" stroke-width="1"/><path d="M0 1.5H9M0 8.5H9M10 2V3M10 4.5V5.5M10 7V8" stroke="#ddd" stroke-width="1"/></svg>
<div class="a" style="left:273px;top:468.5px;width:27px;height:22.5px;background:#2b2b2b"></div>
<div class="a" style="left:273px;top:489.5px;width:27px;height:1.5px;background:#76b9ed"></div>
<svg class="a" style="left:252px;top:472px" width="15" height="15" viewBox="0 0 15 15"><path d="M11.5 9 H4.5 A3.6 3.6 0 0 0 11 11.3" stroke="#2aa7e8" stroke-width="2.2" fill="none"/><path d="M4.3 8.5 A3.6 3.6 0 0 1 11.6 7.6" stroke="#2aa7e8" stroke-width="2.2" fill="none"/><path d="M2.5 13.5 C0 12 3 5 8 2.5 C11 1 14 1 13.5 3" stroke="#f0a81c" stroke-width="1" fill="none"/></svg>
<svg class="a" style="left:280px;top:474px" width="13" height="12" viewBox="0 0 13 12"><path d="M0 1 H5 L6 2 H13 V12 H0Z" fill="#e6b23a"/><rect x="0" y="3.5" width="13" height="8.5" fill="#f8d46a"/><rect x="3" y="7" width="7" height="5" fill="#2b88d8"/><rect x="5" y="8.5" width="3" height="3.5" fill="#f8d46a"/></svg>
<svg class="a" style="left:307px;top:473px" width="13" height="14" viewBox="0 0 13 14"><defs><linearGradient id="g3" x1="0" y1="0" x2="1" y2="1"><stop offset="0" stop-color="#f2f6fa"/><stop offset="0.6" stop-color="#9fd0f0"/><stop offset="1" stop-color="#e8f0f0"/></linearGradient></defs><path d="M4.5 1 L12 2.5 L10.5 13 L0.5 10.5Z" fill="url(#g3)"/><circle cx="3" cy="7" r="0.7" fill="#2bb040"/><circle cx="5.5" cy="8.5" r="0.7" fill="#2bb040"/><circle cx="2.5" cy="9.5" r="0.7" fill="#2bb040"/><circle cx="7.5" cy="9.5" r="0.7" fill="#2bb040"/><circle cx="4.5" cy="11" r="0.7" fill="#2bb040"/></svg>
<svg class="a" style="left:334px;top:474.5px" width="14" height="11" viewBox="0 0 14 11"><path d="M2 0.5 H13.5 L11.5 10.5 H0Z" fill="#3a74d4"/><path d="M4 2.5 L6.8 5 L3.5 7.8" stroke="#fff" stroke-width="1" fill="none"/><path d="M7 8 H9" stroke="#fff" stroke-width="0.9"/></svg>
<svg class="a" style="left:710px;top:475px" width="11" height="9" viewBox="0 0 11 9"><rect x="1.5" y="0.5" width="9" height="6" fill="none" stroke="#ddd" stroke-width="0.9"/><path d="M4 8.5 H8 M6 6.5 V8.5" stroke="#ddd" stroke-width="0.9"/><rect x="0" y="2" width="3" height="4" fill="none" stroke="#ddd" stroke-width="0.7"/></svg>
<svg class="a" style="left:723px;top:475px" width="10" height="10" viewBox="0 0 10 10"><path d="M0.5 3 H2 L4 1 V8 L2 6 H0.5Z" fill="none" stroke="#ddd" stroke-width="0.8"/><circle cx="7" cy="7" r="2.2" fill="#e0242a"/><path d="M6 6 L8 8 M8 6 L6 8" stroke="#fff" stroke-width="0.7"/></svg>
<svg class="a" style="left:776px;top:474px" width="11" height="11" viewBox="0 0 11 11"><path d="M0.5 0.5 H10.5 V8 H6.5 L5.5 10 L4.5 8 H0.5Z" fill="none" stroke="#eee" stroke-width="0.9"/></svg>
<div class="a" style="left:797px;top:468.5px;width:1px;height:22.5px;background:#3c3c3c"></div>

<div class="a" style="left:49px;top:476px;font-size:8px;line-height:9px;color:#333">Type here to search</div>
<div class="a" style="left:741px;top:471px;font-size:6.5px;line-height:8px;color:#fff">8:12 PM</div>
<div class="a" style="left:738px;top:481px;font-size:6.5px;line-height:8px;color:#fff">9/14/2022</div>
</body></html>
